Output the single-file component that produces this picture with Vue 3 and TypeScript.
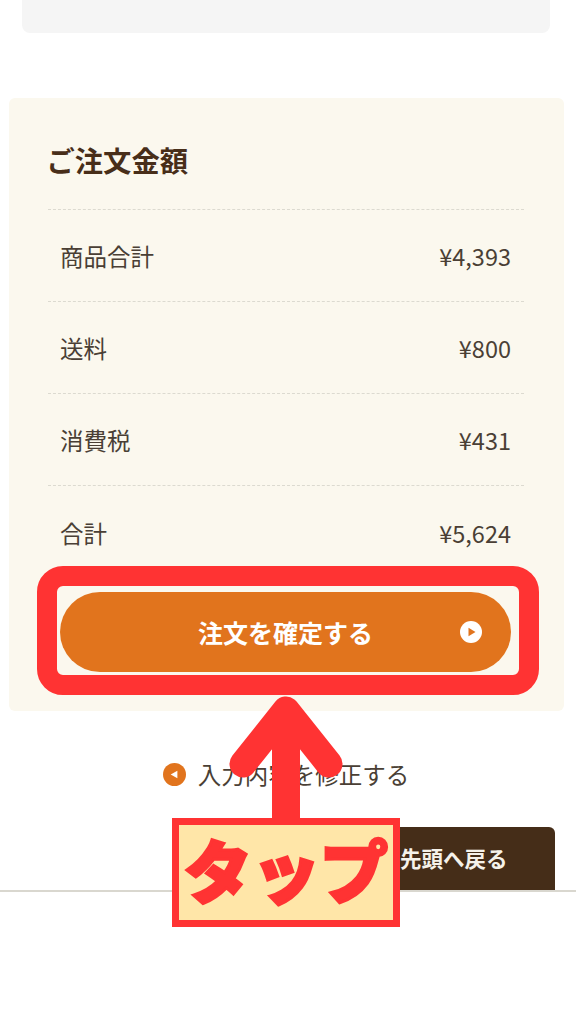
<script setup lang="ts">
const rows = [
  { label: '商品合計', value: '¥4,393' },
  { label: '送料', value: '¥800' },
  { label: '消費税', value: '¥431' },
  { label: '合計', value: '¥5,624' },
]
</script>

<template>
  <div class="page">
    <div class="notice"></div>
    <section class="card">
      <h2 class="title">ご注文金額</h2>
      <dl class="rows">
        <div v-for="row in rows" :key="row.label" class="row">
          <dt>{{ row.label }}</dt>
          <dd>{{ row.value }}</dd>
        </div>
      </dl>
      <button class="confirm" type="button">
        注文を確定する
        <svg class="confirm-icon" viewBox="0 0 22 22" aria-hidden="true">
          <circle cx="11" cy="11" r="11" fill="#fff" />
          <path d="M8.5 6.8 15.5 11 8.5 15.2Z" fill="#e1741d" />
        </svg>
      </button>
    </section>
    <div class="back-link">
      <svg class="back-icon" viewBox="0 0 24 24" aria-hidden="true">
        <circle cx="12" cy="12" r="12" fill="#e1741d" />
        <path d="M15 8 8 12 15 16Z" fill="#fff" />
      </svg>
      <span>入力内容を修正する</span>
    </div>
    <div class="top-row">
      <div class="to-top">先頭へ戻る</div>
    </div>
    <div class="footer"></div>

    <div class="highlight"></div>
    <svg class="arrow" viewBox="0 0 114 124" aria-hidden="true">
      <path d="M14 69 57 15 100 69" fill="none" stroke="#ff3333" stroke-width="27" stroke-linecap="round" stroke-linejoin="round" />
      <path d="M43 20H71V124H43Z" fill="#ff3333" />
    </svg>
    <div class="tap-label">タップ</div>
  </div>
</template>

<style>
body {
  background: #fff;
}
</style>

<style scoped>
.page {
  position: relative;
  width: 576px;
  height: 1024px;
  overflow: hidden;
  font-family: "Noto Sans CJK JP", "Noto Sans", sans-serif;
  color: #4a3f35;
  background: #fff;
}
.notice {
  height: 33px;
  margin: 0 26px 65px 22px;
  border-radius: 0 0 8px 8px;
  background: #f5f5f5;
}
.card {
  display: flex;
  flex-direction: column;
  height: 613px;
  box-sizing: border-box;
  margin: 0 12px 0 9px;
  padding: 42px 40px 0 39px;
  border-radius: 6px;
  background: #fbf8ee;
}
.title {
  margin: 0 0 29px -1.5px;
  font-size: 28.3px;
  line-height: 40px;
  font-weight: 700;
  color: #482e19;
}
.rows {
  margin: 0;
}
.row {
  display: flex;
  justify-content: space-between;
  align-items: center;
  height: 92px;
  box-sizing: border-box;
  padding: 0 13px 0 12px;
  border-top: 1px dashed #dcdad0;
  font-size: 23.5px;
}
.row dd {
  margin: 0;
}
.row:last-child {
  height: 60px;
  padding-top: 35px;
  padding-bottom: 0;
}
.confirm {
  position: relative;
  display: block;
  width: 451px;
  height: 80px;
  margin: 47px 0 0 12px;
  padding: 0;
  border: 0;
  border-radius: 40px;
  background: #e1741d;
  color: #fff;
  font: 700 25px "Noto Sans CJK JP", sans-serif;
}
.confirm-icon {
  position: absolute;
  top: 29px;
  right: 29px;
  width: 22px;
  height: 22px;
}
.back-link {
  display: flex;
  justify-content: center;
  align-items: center;
  gap: 12px;
  margin-top: 46px;
  padding-right: 4px;
  height: 34px;
  font-size: 23.5px;
}
.back-icon {
  width: 23px;
  height: 23px;
}
.top-row {
  display: flex;
  justify-content: flex-end;
  margin-top: 36px;
  padding-right: 21px;
}
.to-top {
  box-sizing: border-box;
  width: 200px;
  height: 63px;
  padding: 13px 0 0 45px;
  border-radius: 6px 6px 0 0;
  background: #452d18;
  color: #f5f2ea;
  font-size: 21.5px;
  line-height: 36px;
  font-weight: 700;
}
.footer {
  height: 133px;
  border-top: 2px solid #d9d7cf;
}
.highlight {
  position: absolute;
  left: 37px;
  top: 566px;
  width: 502px;
  height: 129px;
  box-sizing: border-box;
  border: 20px solid #ff3333;
  border-radius: 26px;
}
.arrow {
  position: absolute;
  left: 229px;
  top: 695px;
  width: 114px;
  height: 124px;
}
.tap-label {
  position: absolute;
  left: 172px;
  top: 818px;
  width: 228px;
  height: 109px;
  box-sizing: border-box;
  border: 7px solid #ff3333;
  background: #ffe6a8;
  color: #ff3333;
  font-size: 68px;
  font-weight: 900;
  line-height: 88px;
  text-align: center;
  white-space: nowrap;
  -webkit-text-stroke: 3px #ff3333;
}
</style>
